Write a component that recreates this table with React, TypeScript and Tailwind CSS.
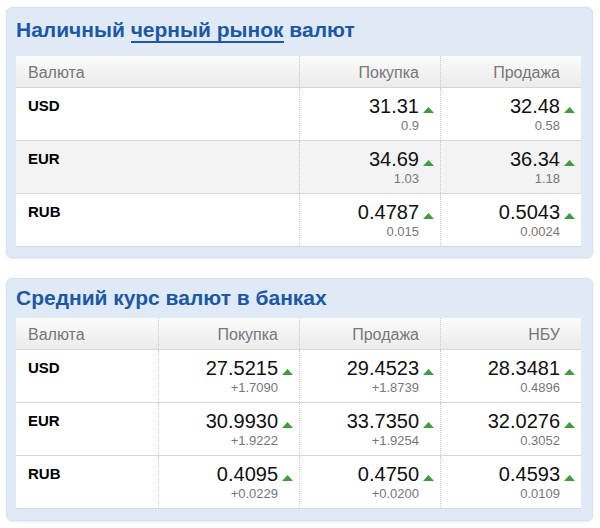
import React from "react";

type Row = { code: string; cells: { v: string; d: string }[] };

const black: Row[] = [
  { code: "USD", cells: [{ v: "31.31", d: "0.9" }, { v: "32.48", d: "0.58" }] },
  { code: "EUR", cells: [{ v: "34.69", d: "1.03" }, { v: "36.34", d: "1.18" }] },
  { code: "RUB", cells: [{ v: "0.4787", d: "0.015" }, { v: "0.5043", d: "0.0024" }] },
];

const banks: Row[] = [
  {
    code: "USD",
    cells: [
      { v: "27.5215", d: "+1.7090" },
      { v: "29.4523", d: "+1.8739" },
      { v: "28.3481", d: "0.4896" },
    ],
  },
  {
    code: "EUR",
    cells: [
      { v: "30.9930", d: "+1.9222" },
      { v: "33.7350", d: "+1.9254" },
      { v: "32.0276", d: "0.3052" },
    ],
  },
  {
    code: "RUB",
    cells: [
      { v: "0.4095", d: "+0.0229" },
      { v: "0.4750", d: "+0.0200" },
      { v: "0.4593", d: "0.0109" },
    ],
  },
];

function Up() {
  return (
    <svg width="11" height="6" viewBox="0 0 11 6" className="ml-[4px] mt-[12px] shrink-0">
      <polygon points="5.5,0 11,6 0,6" fill="#3f9d3f" />
    </svg>
  );
}

function Table({
  cols,
  heads,
  rows,
  zebra,
}: {
  cols: string;
  heads: string[];
  rows: Row[];
  zebra?: boolean;
}) {
  return (
    <div className="w-[565px] bg-white">
      <div
        className={`grid ${cols} h-[32px] border-b border-[#d8d8d8] bg-gradient-to-b from-[#fbfbfb] to-[#ebebeb] text-[16px] leading-[32px] text-[#777]`}
      >
        <div className="pl-[12px] pt-[1px]">Валюта</div>
        {heads.map((h) => (
          <div key={h} className="border-l border-dotted border-[#c8c8c8] pr-[21px] pt-[1px] text-right">
            {h}
          </div>
        ))}
      </div>
      {rows.map((r, i) => (
        <div
          key={r.code}
          className={`grid ${cols} h-[53px] border-b border-[#d8d8d8] ${zebra && i === 1 ? "bg-[#f3f3f3]" : "bg-white"}`}
        >
          <div className="pl-[12px] pt-[9px] text-[15px] font-bold leading-[18px] text-black">{r.code}</div>
          {r.cells.map((c, j) => (
            <div key={j} className="border-l border-dotted border-[#c8c8c8] pr-[6px] pt-[7px] text-right">
              <div className="flex items-start justify-end">
                <span className="text-[20px] leading-[22px] text-[#111]">{c.v}</span>
                <Up />
              </div>
              <div className="mt-[1px] pr-[15px] text-[13px] leading-[16px] text-[#777]">{c.d}</div>
            </div>
          ))}
        </div>
      ))}
    </div>
  );
}

export default function App() {
  return (
    <div className="min-h-[528px] w-[600px] bg-white pt-[7px] font-['Liberation_Sans',Arial,sans-serif]">
      <div className="ml-[6px] w-[587px] rounded-[6px] border border-[#d4e1f1] bg-[#e0eaf7] pb-[10px] pl-[9px] pt-[10px] shadow-[0_1px_2px_rgba(0,0,0,0.08)]">
        <h2 className="mb-[14px] text-[21px] font-bold leading-[24px] text-[#1c58a3]">
          Наличный <span className="border-b-2 border-[#1c58a3]">черный рынок</span> валют
        </h2>
        <Table cols="grid-cols-[283px_141px_141px]" heads={["Покупка", "Продажа"]} rows={black} zebra />
      </div>
      <div className="ml-[6px] mt-[20px] w-[587px] rounded-[6px] border border-[#d4e1f1] bg-[#e0eaf7] pb-[11px] pl-[9px] pt-[7px] shadow-[0_1px_2px_rgba(0,0,0,0.08)]">
        <h2 className="mb-[8px] text-[21px] font-bold leading-[24px] text-[#1c58a3]">
          Средний курс валют в банках
        </h2>
        <Table
          cols="grid-cols-[142px_141px_141px_141px]"
          heads={["Покупка", "Продажа", "НБУ"]}
          rows={banks}
        />
      </div>
    </div>
  );
}
